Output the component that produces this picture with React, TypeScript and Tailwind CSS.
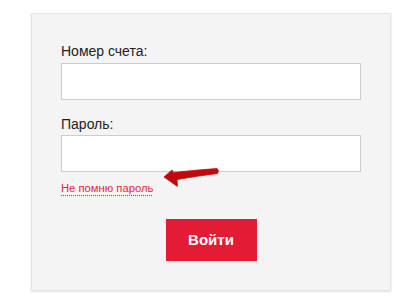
export default function App() {
  return (
    <div className="min-h-screen w-full bg-white pt-[13px] pl-[31px]" style={{ fontFamily: '"Liberation Sans", Arial, sans-serif' }}>
      <div className="w-[360px] border border-[#e4e4e4] bg-[#f4f4f4] px-[29px] pt-[28px] pb-[29px] shadow-[0_1px_2px_rgba(0,0,0,0.12)]">
        <label className="block text-[14px] leading-[18px] text-[#222]">Номер счета:</label>
        <input className="mt-[3px] block h-[37px] w-[300px] border border-[#cccccc] bg-white outline-none" />

        <label className="mt-[15px] block text-[14px] leading-[18px] text-[#222]">Пароль:</label>
        <input type="password" className="mt-[2px] block h-[37px] w-[300px] border border-[#cccccc] bg-white outline-none" />

        <div className="relative mt-[3px] h-[16px]">
          <a href="#" className="text-[11.25px] leading-[16px] text-[#e0283f] underline decoration-dotted decoration-[#e0283f] underline-offset-[3px]">
            Не помню пароль
          </a>
          {/* arrow pointing at the link */}
          <svg className="absolute left-[99px] top-[-11px]" width="62" height="26" viewBox="0 0 62 26">
            <path
              d="M4 13 L12 6 L13.5 8.5 Q36 6 57 4.5 Q59.5 6.5 57.5 9.5 Q37 12 17 15.5 L17.5 22.5 Z"
              fill="#bf0b0b"
              stroke="#bf0b0b"
              strokeWidth="0.8"
              strokeLinejoin="round"
            />
          </svg>
        </div>

        <div className="mt-[28px] flex justify-center">
          <button className="h-[42px] w-[91px] bg-[#e31b35] text-[15px] font-bold text-white">Войти</button>
        </div>
      </div>
    </div>
  );
}
